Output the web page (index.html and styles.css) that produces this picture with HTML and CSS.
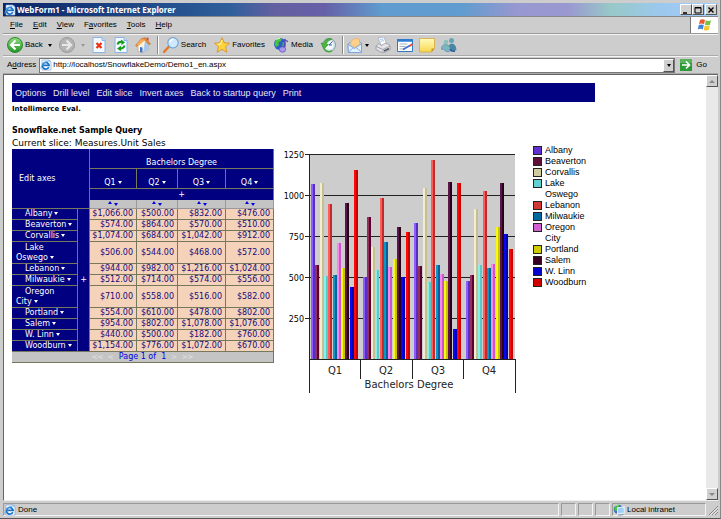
FILE: index.html
```html
<!DOCTYPE html>
<html lang="en">
<head>
<meta charset="utf-8">
<title>WebForm1 - Microsoft Internet Explorer</title>
<link rel="stylesheet" href="styles.css">
</head>
<body>
<svg class="defs" aria-hidden="true">
  <defs>
    <linearGradient id="green" x2="0" y2="1"><stop stop-color="#8fdc7c"/><stop offset="1" stop-color="#1f9426"/></linearGradient>
    <linearGradient id="note" x2="0" y2="1"><stop stop-color="#fffbc0"/><stop offset="1" stop-color="#f7d84c"/></linearGradient>
    <symbol id="page-e" viewBox="0 0 12 12">
      <path d="M2 1h7l2 2v8H2z" fill="#fff" stroke="#7aa4d8" stroke-width=".7"/>
      <path d="M8.8 8.2A3.3 3.3 0 1 1 9.100 6.400H3.500" fill="none" stroke="#1a72c8" stroke-width="1.700"/>
      <path d="M.8 9.500C1 6 6 1.500 10.500 2" fill="none" stroke="#58b0ec" stroke-width=".9"/>
    </symbol>
    <symbol id="globe" viewBox="0 0 16 16">
      <circle cx="7" cy="7" r="6" fill="#2a5ed0"/>
      <path d="M2 4.500Q5 0 9 1.500L8 4 5.500 5.500 6 8 3.500 10Q.5 7 2 4.500zM9.500 5.500l3-1q1 3-.5 5.500l-2.500-1z" fill="#4ac040"/>
      <path d="M3 3q2-2 4-1.500" stroke="#d0ffd0" fill="none"/>
    </symbol>
  </defs>
</svg>
<div class="window">
  <header class="titlebar">
    <svg class="icon-s" viewBox="0 0 12 12"><use href="#page-e"/></svg>
    <h1>WebForm1 - Microsoft Internet Explorer</h1>
    <div class="window-buttons">
      <button aria-label="Minimize"><svg viewBox="0 0 10 10"><path d="M2 8h4" stroke="#000" stroke-width="1.500"/></svg></button>
      <button aria-label="Maximize"><svg viewBox="0 0 10 10"><path d="M2 2.500h6v5.500H2zM2 3h6" fill="none" stroke="#000"/></svg></button>
      <button aria-label="Close" class="close"><svg viewBox="0 0 10 10"><path d="M2.500 2.500l5 5m0-5l-5 5" stroke="#000" stroke-width="1.400"/></svg></button>
    </div>
  </header>

  <div class="menu-row">
    <nav class="menubar" aria-label="Browser menu">
      <button><u>F</u>ile</button><button><u>E</u>dit</button><button><u>V</u>iew</button><button>F<u>a</u>vorites</button><button><u>T</u>ools</button><button><u>H</u>elp</button>
    </nav>
    <div class="brand">
      <svg viewBox="0 0 16 14">
        <path d="M3 2q2.500-1.500 5 0L7 6.300Q4.500 5 2 6.200z" fill="#ec5a2c"/>
        <path d="M8.800 2.300q2.700 1.400 5.200 0L13 6.700q-2.500 1.300-5.100 0z" fill="#7cc043"/>
        <path d="M1.800 7.100q2.400-1.400 5 0l-1 4.400q-2.500-1.300-5 0z" fill="#3f85e0"/>
        <path d="M7.700 7.500q2.500 1.300 5.100 0l-1 4.400q-2.600 1.400-5.100 0z" fill="#f6c531"/>
      </svg>
    </div>
  </div>

  <div class="toolbar" role="toolbar" aria-label="Standard buttons">
    <button class="labelled"><svg class="icon" viewBox="0 0 16 16"><circle cx="8" cy="8" r="7.500" fill="url(#green)" stroke="#2b8c2b"/><path d="M8.500 3.500L4 8l4.500 4.500M4.500 8H13" fill="none" stroke="#fff" stroke-width="2.200"/></svg>Back<i class="caret"></i></button>
    <button class="forward" aria-label="Forward"><svg class="icon" viewBox="0 0 16 16"><circle cx="8" cy="8" r="7.500" fill="#b4b4b4" stroke="#989898"/><path d="M7.500 3.500L12 8l-4.500 4.500M11.500 8H3" fill="none" stroke="#e8e8e8" stroke-width="2.200"/></svg><i class="caret dim"></i></button>
    <button aria-label="Stop"><svg class="icon" viewBox="0 0 16 16"><path d="M2 .5h9l3 3v12H2z" fill="#f4faff" stroke="#88b4e4"/><path d="M11 .5v3h3" fill="#c0dcf8" stroke="#88b4e4"/><path d="M5.500 6l5 5m0-5l-5 5" stroke="#f03010" stroke-width="2.200"/></svg></button>
    <button aria-label="Refresh"><svg class="icon" viewBox="0 0 16 16"><path d="M2 .5h9l3 3v12H2z" fill="#f4faff" stroke="#88b4e4"/><path d="M11 .5v3h3" fill="#c0dcf8" stroke="#88b4e4"/><path d="M4.500 7.500q1-3.200 4.500-2.500M11.500 8.500q-1 3.500-4.500 3" fill="none" stroke="#189c20" stroke-width="2"/><path d="M8 2.500l4 2.700-3.500 3zM8 8.800L4 11.500l3.800 2.700z" fill="#189c20"/></svg></button>
    <button aria-label="Home"><svg class="icon" viewBox="0 0 16 16"><path d="M3 7.500v7l5 1 5.500-3V6L9 2z" fill="#fff3dc" stroke="#b0a088" stroke-width=".6"/><path d="M8 15.500l5.500-3V6L10 4z" fill="#a8c8f0"/><path d="M.5 8.500L6.500 1.500 10.500.7 15.500 7l-1.500.7L9.500 3 1.500 9.500z" fill="#e88a38" stroke="#b86018" stroke-width=".5"/><path d="M2 7l4.500-5 3.500 1-7 6z" fill="#f4ac5c"/><path d="M11.500.8h2V4l-2-2z" fill="#c84830"/><path d="M5 10l2.500.4v5L5 15z" fill="#3c74c8"/></svg></button>
    <span class="divider"></span>
    <button class="labelled"><svg class="icon" viewBox="0 0 16 16"><path d="M6 9.500L1.200 14.800" stroke="#e07828" stroke-width="2.400" stroke-linecap="round"/><circle cx="10" cy="5.800" r="5.200" fill="#cfe9ff" stroke="#6fa3d8" stroke-width="1.100"/><path d="M7 5q.8-2.700 3.500-2.700" fill="none" stroke="#fff" stroke-width="1.500"/></svg>Search</button>
    <button class="labelled"><svg class="icon" viewBox="0 0 16 16"><path d="M8 .8l2.200 5 5.300.4-4 3.600 1.400 5.500L8 12.300l-5 3 1.500-5.500-4-3.600 5.300-.4z" fill="#fcd43c" stroke="#d88c18" stroke-width=".8"/><path d="M8 3L6.500 7l-3 .3" stroke="#fffac0" fill="none"/></svg>Favorites</button>
    <button class="labelled"><svg class="icon" viewBox="0 0 16 16"><use href="#globe"/><path d="M11.500 2v9.500M11.500 2q1 2 3.500 2.500" stroke="#5848b8" stroke-width="1.400" fill="none"/><ellipse cx="9.500" cy="12.500" rx="3.200" ry="2.700" fill="#a898ec" stroke="#6050b8" stroke-width=".7"/></svg>Media</button>
    <button aria-label="History"><svg class="icon" viewBox="0 0 16 16"><circle cx="9" cy="8" r="6.500" fill="#cfe4e8" stroke="#88a0a8"/><circle cx="9" cy="8" r="4.600" fill="#f4fcff"/><path d="M9 8l3.500-3.500M9 8h3" stroke="#3858a0"/><path d="M12 2Q6 0 3.500 6.500L1 6l3 6 4.500-4.500-2.300-.4Q7.500 3.500 12 2z" fill="#46b83c" stroke="#228424" stroke-width=".5"/><path d="M4 12q3 4 8 2" fill="none" stroke="#46a83c" stroke-width="1.500"/></svg></button>
    <span class="divider"></span>
    <button class="mail" aria-label="Mail"><svg class="icon" viewBox="0 0 16 16"><path d="M1 7l7-5 6.500 4v9L1.500 15.500z" fill="#bcdcfa" stroke="#6c94d0" stroke-width=".8"/><path d="M4 4q4-4 8-2l1 5-5 3.500L3.500 8z" fill="#ffd08a" stroke="#e8a050" stroke-width=".5"/><path d="M1 7.500l6.500 4 7-4.500v8.500h-13z" fill="#e2f1ff" stroke="#6c94d0" stroke-width=".7"/><path d="M1.500 15l5-4.500m8 4.500L9 10.500" stroke="#8cb0e0" fill="none"/></svg><i class="caret"></i></button>
    <button aria-label="Print"><svg class="icon" viewBox="0 0 16 16"><path d="M3 1l6-1 2.500 7-5 2z" fill="#fff" stroke="#98a8c0" stroke-width=".7"/><path d="M1 9l3-2.500 2 2L11 6l4 2.500v4L8 16l-7-3.500z" fill="#e4e4e8" stroke="#8c8c94" stroke-width=".7"/><path d="M1 9.500l7 3 7-3.500M8 12.500V16" fill="none" stroke="#a0a0a8"/><path d="M5 2.500l3.500-.5M5.500 4.200L9 3.700" stroke="#a8c8ec"/><path d="M9 14l5-2.500" stroke="#505868" stroke-width="1.400"/></svg></button>
    <button aria-label="Edit"><svg class="icon" viewBox="0 0 16 16"><path d="M.5 2.500h15v12H.5z" fill="#fff" stroke="#3078c4"/><path d="M0 3.500h16" stroke="#2c7cd4" stroke-width="2.500"/><path d="M2.500 7h8m-8 2.500h6m-6 2.500h4" stroke="#8c9cac" stroke-width=".8"/><path d="M6 12.500l7-4" stroke="#3c70d0" stroke-width="1.700"/><path d="M12.500 9l3-2" stroke="#e84c28" stroke-width="2"/></svg></button>
    <button aria-label="Discuss"><svg class="icon" viewBox="0 0 16 16"><path d="M.5 1.500h15v10l-3 3.500H.5z" fill="url(#note)" stroke="#d8a838" stroke-width=".8"/><path d="M15.500 11.500h-3V15z" fill="#d09020"/></svg></button>
    <button aria-label="Messenger"><svg class="icon" viewBox="0 0 16 16"><circle cx="10.500" cy="3.500" r="2.500" fill="#68a4b8"/><path d="M7.500 14q-1-7 3-7.500 4.500 0 5 6.500-3 2-8 1z" fill="#4888a0"/><circle cx="5" cy="5" r="2.300" fill="#8cc0b8"/><path d="M0 12q1-5 5-4.500 3.500 0 5 5.500-2.500 3-5 1.500Q3 12 0 12z" fill="#7cb4c0" stroke="#4c8898" stroke-width=".5"/><path d="M9 12q2 3 5 2" stroke="#3858a8" stroke-width="1.500" fill="none"/></svg></button>
  </div>

  <form class="addressbar">
    <label for="url">A<u>d</u>dress</label>
    <div class="url-box">
      <svg class="icon-s" viewBox="0 0 12 12"><use href="#page-e"/></svg>
      <input id="url" type="text" value="http://localhost/SnowflakeDemo/Demo1_en.aspx">
      <button type="button" class="bevel" aria-label="Show addresses"><i class="caret"></i></button>
    </div>
    <button type="button" class="go"><svg viewBox="0 0 12 12"><path d="M0 0h12v12H0z" fill="#2c9a36"/><path d="M0 0h12v4H0z" fill="#57b35a"/><path d="M2 6h7M6 2.500L9.500 6 6 9.500" fill="none" stroke="#fff" stroke-width="1.700"/></svg>Go</button>
  </form>

  <div class="viewport">
    <main class="page">
      <nav class="query-menu" aria-label="Query">
        <a href="#">Options</a><a href="#">Drill level</a><a href="#">Edit slice</a><a href="#">Invert axes</a><a href="#">Back to startup query</a><a href="#">Print</a>
      </nav>
      <p class="eval">Intellimerce Eval.</p>
      <div class="report">
        <section class="grid-side">
          <h2>Snowflake.net Sample Query</h2>
          <p class="slice">Current slice: Measures.Unit Sales</p>
          <table class="pivot">
            <colgroup><col class="c-name"><col class="c-plus"><col class="c-q1"><col class="c-q2"><col class="c-q3"><col class="c-q4"></colgroup>
            <thead>
              <tr class="h-group"><th class="axes" colspan="2" rowspan="4">Edit axes</th><th colspan="4">Bachelors Degree</th></tr>
              <tr class="h-quarter"><th>Q1<i class="drop"></i></th><th>Q2<i class="drop"></i></th><th>Q3<i class="drop"></i></th><th>Q4<i class="drop"></i></th></tr>
              <tr class="h-plus"><th colspan="4">+</th></tr>
              <tr class="h-sort"><td><i class="up"></i><i class="down"></i></td><td><i class="up"></i><i class="down"></i></td><td><i class="up"></i><i class="down"></i></td><td><i class="up"></i><i class="down"></i></td></tr>
            </thead>
            <tbody>
              <tr><th>Albany<i class="drop"></i></th><th class="plus" rowspan="11">+</th><td>$1,066.00</td><td>$500.00</td><td>$832.00</td><td>$476.00</td></tr>
              <tr><th>Beaverton<i class="drop"></i></th><td>$574.00</td><td>$864.00</td><td>$570.00</td><td>$510.00</td></tr>
              <tr><th>Corvallis<i class="drop"></i></th><td>$1,074.00</td><td>$684.00</td><td>$1,042.00</td><td>$912.00</td></tr>
              <tr class="tall"><th>Lake<br>Oswego<i class="drop"></i></th><td>$506.00</td><td>$544.00</td><td>$468.00</td><td>$572.00</td></tr>
              <tr><th>Lebanon<i class="drop"></i></th><td>$944.00</td><td>$982.00</td><td>$1,216.00</td><td>$1,024.00</td></tr>
              <tr><th>Milwaukie<i class="drop"></i></th><td>$512.00</td><td>$714.00</td><td>$574.00</td><td>$556.00</td></tr>
              <tr class="tall"><th>Oregon<br>City<i class="drop"></i></th><td>$710.00</td><td>$558.00</td><td>$516.00</td><td>$582.00</td></tr>
              <tr><th>Portland<i class="drop"></i></th><td>$554.00</td><td>$610.00</td><td>$478.00</td><td>$802.00</td></tr>
              <tr><th>Salem<i class="drop"></i></th><td>$954.00</td><td>$802.00</td><td>$1,078.00</td><td>$1,076.00</td></tr>
              <tr><th>W. Linn<i class="drop"></i></th><td>$440.00</td><td>$500.00</td><td>$182.00</td><td>$760.00</td></tr>
              <tr><th>Woodburn<i class="drop"></i></th><td>$1,154.00</td><td>$776.00</td><td>$1,072.00</td><td>$670.00</td></tr>
            </tbody>
            <tfoot>
              <tr><td colspan="6"><span class="off">&lt;&lt;&nbsp; &lt;</span>&nbsp; Page 1 of&nbsp; 1&nbsp; <span class="off">&gt;&nbsp; &gt;&gt;</span></td></tr>
            </tfoot>
          </table>
        </section>
        <svg class="chart" viewBox="0 0 240 250" role="img" aria-label="Unit sales by quarter">
          <path d="M30 10h206v205H30z" fill="#cdcdcd"/>
          <path d="M26 10.500h210M26 51.500h210M26 92.500h210M26 133.500h210M26 174.500h210" stroke="#222"/>
          <g id="bars" shape-rendering="crispEdges"></g>
          <path d="M30.500 10v239M30 215.500h206M81.500 215v20M133.500 215v20M184.500 215v20M236.500 215v34" fill="none" stroke="#222"/>
          <g class="scale"><text x="25" y="14">1250</text><text x="25" y="55">1000</text><text x="25" y="96">750</text><text x="25" y="137">500</text><text x="25" y="178">250</text></g>
          <g class="category"><text x="56" y="230">Q1</text><text x="107" y="230">Q2</text><text x="159" y="230">Q3</text><text x="210" y="230">Q4</text><text x="130" y="244">Bachelors Degree</text></g>
        </svg>
        <ul class="legend">
          <li><i class="albany"></i>Albany</li>
          <li><i class="beaverton"></i>Beaverton</li>
          <li><i class="corvallis"></i>Corvallis</li>
          <li><i class="oswego"></i>Lake<br>Oswego</li>
          <li><i class="lebanon"></i>Lebanon</li>
          <li><i class="milwaukie"></i>Milwaukie</li>
          <li><i class="oregon"></i>Oregon<br>City</li>
          <li><i class="portland"></i>Portland</li>
          <li><i class="salem"></i>Salem</li>
          <li><i class="linn"></i>W. Linn</li>
          <li><i class="woodburn"></i>Woodburn</li>
        </ul>
      </div>
    </main>
    <div class="scrollbar">
      <button class="bevel" aria-label="Scroll up"><i class="tri-up"></i></button>
      <button class="bevel" aria-label="Scroll down"><i class="tri-down"></i></button>
    </div>
  </div>

  <footer class="statusbar">
    <div class="status"><svg class="icon-s" viewBox="0 0 12 12"><use href="#page-e"/></svg>Done</div>
    <div class="cell"></div><div class="cell"></div><div class="cell"></div>
    <div class="zone"><svg class="icon-s" viewBox="0 0 16 16"><use href="#globe"/><path d="M6 5l9-1v8l-9 1z" fill="#9cd0fa" stroke="#e8f0fa" stroke-width="1.500"/><path d="M7 15l7-1" stroke="#7890b0" stroke-width="1.500"/></svg>Local intranet</div>
    <svg class="grip" viewBox="0 0 10 12"><path d="M1 12L10 3M4 12l6-6M7 12l3-3" stroke="#888"/><path d="M2 12.500l8-8M5 12.500l5-5" stroke="#fff" stroke-width=".7"/></svg>
  </footer>
</div>
<script src="chart.js"></script>
</body>
</html>
```
FILE: chart.js
```js
// One entry per city: lit face, shaded face, then the values for Q1 to Q4.
const series = [
  ['#8f5cff', '#5a2cc0', 1066, 500, 832, 476],
  ['#93305c', '#5a0030', 574, 864, 570, 510],
  ['#f4ecd0', '#c4c094', 1074, 684, 1042, 912],
  ['#88f0e8', '#5cc8c8', 506, 544, 468, 572],
  ['#ff5c5c', '#c02c2c', 944, 982, 1216, 1024],
  ['#0c98c4', '#00609c', 512, 714, 574, 556],
  ['#f888f0', '#c858c8', 710, 558, 516, 582],
  ['#f8f810', '#c8c400', 554, 610, 478, 802],
  ['#5c1450', '#280014', 954, 802, 1078, 1076],
  ['#0808f0', '#0000b8', 440, 500, 182, 760],
  ['#ff0808', '#c80000', 1154, 776, 1072, 670]
];
const bars = document.getElementById('bars');
const base = 215;
const unit = 205 / 1250;

function face(x, width, height, fill) {
  const rect = document.createElementNS('http://www.w3.org/2000/svg', 'rect');
  rect.setAttribute('x', x);
  rect.setAttribute('y', base - height);
  rect.setAttribute('width', width);
  rect.setAttribute('height', height);
  rect.setAttribute('fill', fill);
  bars.append(rect);
}

for (let quarter = 0; quarter < 4; quarter++) {
  series.forEach(([lit, shade, ...values], i) => {
    const x = Math.round(32 + quarter * 51.5 + i * 4.3);
    const height = Math.round(values[quarter] * unit);
    face(x, 4, height, shade);
    face(x, 2, height, lit);
  });
}
```
FILE: styles.css
```css
* { box-sizing: border-box; }
html, body { height: 100%; margin: 0; }
body { background: #cdcdcd; font: 8px/10px "Liberation Sans", Arial, sans-serif; color: #000; }
h1, h2, p, ul { margin: 0; padding: 0; font-size: inherit; }
button { border: 0; padding: 0; background: none; font: inherit; color: inherit; }
svg { display: block; flex: none; }
.defs { position: absolute; width: 0; height: 0; }
.icon { width: 16px; height: 16px; }
.icon-s { width: 12px; height: 12px; }

.window { display: flex; flex-direction: column; height: 100vh; padding: 3px 2px 1px 3px; border-bottom: 1px solid #555; border-right: 1px solid #888; }

.titlebar { display: flex; align-items: center; gap: 1px; flex: none; height: 13px; padding: 0 1px;
  background: linear-gradient(90deg, #0a2468 0, #2f609c 32%, #645fa0 38%, #6560a8 45%, #609ccf 53%, #609ccf 64%, #9898d0 72%, #9a98d0 79%, #98c8c8 85%, #9cc8ee 92%, #a4ccf8); }
.titlebar h1 { flex: 1; color: #fff; font-family: "Noto Sans", Tahoma, sans-serif; font-weight: bold; white-space: nowrap; }
.window-buttons { display: flex; }
.window-buttons button, .bevel { display: flex; align-items: center; justify-content: center; width: 12px; height: 11px; background: #d0d0d0; border: 1px solid; border-color: #fff #555 #555 #fff; }
.window-buttons svg { width: 10px; height: 10px; }
.window-buttons .close { margin-left: 1px; }

.menu-row { display: flex; flex: none; height: 18px; border-top: 1px solid #888; border-bottom: 1px solid #999; }
.menubar { display: flex; flex: 1; align-items: center; gap: 10px; padding-left: 7px; }
.brand { display: flex; align-items: center; justify-content: center; width: 28px; background: #fff; border-left: 1px solid #777; }
.brand svg { width: 16px; height: 14px; }

.toolbar { display: flex; flex: none; align-items: center; gap: 6px; height: 22px; padding-left: 3px; border-top: 1px solid #f4f4f4; border-bottom: 1px solid #aaa; }
.toolbar button { display: flex; align-items: center; gap: 2px; }
.toolbar .labelled { padding: 0 1px; }
.toolbar .labelled .caret { margin-left: 3px; }
.toolbar .forward { gap: 6px; }
.divider { width: 2px; height: 18px; margin-right: -3px; border-left: 1px solid #888; border-right: 1px solid #fff; }
.caret { border: 2px solid transparent; border-top: 3px solid #000; border-bottom: 0; }
.caret.dim { border-top-color: #999; }

.addressbar { display: flex; flex: none; align-items: center; gap: 3px; height: 18px; margin: 0; padding: 0 11px 0 4px; border-top: 1px solid #f4f4f4; border-bottom: 1px solid #aaa; }
.url-box { display: flex; flex: 1; align-items: center; gap: 1px; height: 15px; background: #fff; border: 1px solid #777; }
.url-box input { flex: 1; min-width: 0; border: 0; padding: 0; outline: 0; background: none; font: inherit; color: inherit; }
.url-box .bevel { width: 11px; height: 13px; }
.go { display: flex; align-items: center; gap: 4px; padding-left: 2px; }
.go svg { width: 12px; height: 12px; }

.viewport { display: flex; flex: 1; min-height: 0; border: 1px solid #666; border-right: 0; border-bottom-color: #eee; background: #fff; }
.page { flex: 1; min-width: 0; padding: 8px; overflow: hidden; }
.scrollbar { display: flex; flex-direction: column; justify-content: space-between; width: 12px; background: #e9e9e9; }
.scrollbar .bevel { height: 12px; }
.tri-up, .tri-down { border: 3px solid transparent; }
.tri-up { border-bottom: 3px solid #888; border-top: 0; }
.tri-down { border-top: 3px solid #888; border-bottom: 0; }

.query-menu { display: flex; gap: 7px; align-items: center; width: 85%; height: 19px; padding-left: 3px; background: #000080; font-size: 9px; }
.query-menu a { color: #e8e8f4; text-decoration: none; white-space: nowrap; }
.eval { margin-top: 2px; font: bold 7px/10px "DejaVu Sans", Verdana, sans-serif; }

.report { display: flex; align-items: flex-start; margin-top: 11px; }
.grid-side { width: 262px; font-family: "DejaVu Sans", Verdana, sans-serif; }
.grid-side h2 { font-size: 8px; line-height: 12px; }
.slice { font-size: 9px; line-height: 12px; }

.pivot { width: 100%; table-layout: fixed; border-collapse: separate; border-spacing: 0; font-size: 8px; line-height: 10px; }
.c-name { width: 66px; } .c-plus { width: 12px; } .c-q1 { width: 47px; } .c-q2 { width: 41px; } .c-q3, .c-q4 { width: 48px; }
.pivot th, .pivot td { height: 11px; padding: 0; border: 0 solid #77775c; border-width: 0 1px 1px 0; white-space: nowrap; }
.pivot th { background: #000080; color: #fff; font-weight: normal; }
.pivot tbody td { padding-right: 3px; background: #f5d3bb; color: #180878; text-align: right; }
.pivot .axes { padding-left: 7px; text-align: left; }
.pivot .h-group th { height: 20px; padding-top: 8px; }
.pivot .h-group .axes { padding-top: 0; }
.pivot .h-quarter th { height: 20px; padding-top: 8px; }
.pivot .h-plus th { height: 11px; border-bottom: 0; }
.pivot .h-sort td { height: 9px; background: #c4c4c4; text-align: center; line-height: 8px; border-color: #999; }
.pivot tbody th { padding-left: 4px; text-indent: 9px; text-align: left; }
.pivot tbody .plus { padding: 0; text-indent: 0; text-align: center; }
.pivot .tall th, .pivot .tall td { height: 22px; }
.pivot tfoot td { background: #c4c4c4; color: #0000e0; text-align: center; }
.off { color: #e4e4e4; font-size: 7px; }
.drop { display: inline-block; margin-left: 2px; vertical-align: 1px; border: 2px solid transparent; border-top: 3px solid #fff; border-bottom: 0; }
.up, .down { display: inline-block; margin: 0 1px; border: 2px solid transparent; }
.up { border-bottom: 3px solid #0000e0; border-top: 0; vertical-align: 2px; }
.down { border-top: 3px solid #0000e0; border-bottom: 0; }

.chart { width: 240px; height: 250px; margin: 19px 0 0 5px; font-family: "DejaVu Sans", Verdana, sans-serif; }
.scale { font-size: 8px; text-anchor: end; }
.category { font-size: 10px; text-anchor: middle; fill: #222; }

.legend { margin: 20px 0 0 14px; list-style: none; font-size: 9px; line-height: 11px; }
.legend li { display: flex; gap: 3px; }
.legend i { width: 9px; height: 9px; margin-top: 1px; border: 1px solid #222; }
.albany { background: #6030d0; } .beaverton { background: #601038; } .corvallis { background: #d0cca0; } .oswego { background: #60d0d0; }
.lebanon { background: #d03838; } .milwaukie { background: #0068a0; } .oregon { background: #d060d0; } .portland { background: #d0cc00; }
.salem { background: #380020; } .linn { background: #0000d0; } .woodburn { background: #d00000; }

.statusbar { display: flex; flex: none; gap: 2px; height: 16px; padding-top: 2px; }
.statusbar > div { display: flex; align-items: center; gap: 2px; height: 13px; border: 1px solid; border-color: #999 #f4f4f4 #f4f4f4 #999; }
.status { flex: 1; }
.cell { width: 15px; }
.zone { width: 94px; }
.grip { width: 10px; height: 12px; }
```
